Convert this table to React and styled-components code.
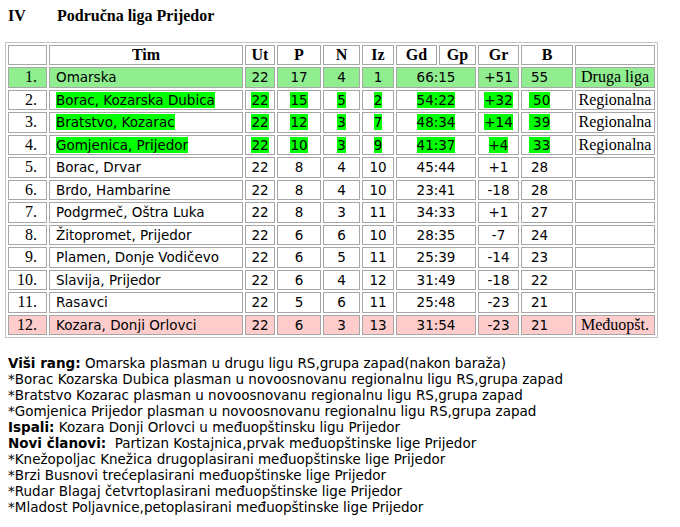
import styled, { createGlobalStyle } from "styled-components"

const GlobalStyle = createGlobalStyle`
    body {
        margin : 0;
        background : #ffffff;
        color : #000000;
    }
`

const rows = [
    { rank: "1.", team: "Omarska", ut: 22, p: 17, n: 4, iz: 1, goals: "66:15", gr: "+51", b: 55, note: "Druga liga", row: "up" },
    { rank: "2.", team: "Borac, Kozarska Dubica", ut: 22, p: 15, n: 5, iz: 2, goals: "54:22", gr: "+32", b: 50, note: "Regionalna", mark: true },
    { rank: "3.", team: "Bratstvo, Kozarac", ut: 22, p: 12, n: 3, iz: 7, goals: "48:34", gr: "+14", b: 39, note: "Regionalna", mark: true },
    { rank: "4.", team: "Gomjenica, Prijedor", ut: 22, p: 10, n: 3, iz: 9, goals: "41:37", gr: "+4", b: 33, note: "Regionalna", mark: true },
    { rank: "5.", team: "Borac, Drvar", ut: 22, p: 8, n: 4, iz: 10, goals: "45:44", gr: "+1", b: 28 },
    { rank: "6.", team: "Brdo, Hambarine", ut: 22, p: 8, n: 4, iz: 10, goals: "23:41", gr: "-18", b: 28 },
    { rank: "7.", team: "Podgrmeč, Oštra Luka", ut: 22, p: 8, n: 3, iz: 11, goals: "34:33", gr: "+1", b: 27 },
    { rank: "8.", team: "Žitopromet, Prijedor", ut: 22, p: 6, n: 6, iz: 10, goals: "28:35", gr: "-7", b: 24 },
    { rank: "9.", team: "Plamen, Donje Vodičevo", ut: 22, p: 6, n: 5, iz: 11, goals: "25:39", gr: "-14", b: 23 },
    { rank: "10.", team: "Slavija, Prijedor", ut: 22, p: 6, n: 4, iz: 12, goals: "31:49", gr: "-18", b: 22 },
    { rank: "11.", team: "Rasavci", ut: 22, p: 5, n: 6, iz: 11, goals: "25:48", gr: "-23", b: 21 },
    { rank: "12.", team: "Kozara, Donji Orlovci", ut: 22, p: 6, n: 3, iz: 13, goals: "31:54", gr: "-23", b: 21, note: "Međuopšt.", row: "down" },
]

const rowColors = {
    up: "#90ee90",
    down: "#ffcccc",
}

const colWidths = [39, 194, 30, 44, 37, 32, 41, 37, 41, 52, 80]

const Hl = ({ on, children }) => (on ? <Mark>{children}</Mark> : children)

const App = () => {
    return (
        <Page>
            <GlobalStyle />
            <Title>
                <TitleNum>IV</TitleNum>
                <span>Područna liga Prijedor</span>
            </Title>
            <Table>
                <colgroup>
                    {colWidths.map((w, i) => (
                        <col key={i} style={{ width: w }} />
                    ))}
                </colgroup>
                <thead>
                    <tr>
                        <Head></Head>
                        <Head>Tim</Head>
                        <Head>Ut</Head>
                        <Head>P</Head>
                        <Head>N</Head>
                        <Head>Iz</Head>
                        <Head>Gd</Head>
                        <Head>Gp</Head>
                        <Head>Gr</Head>
                        <Head>B</Head>
                        <Head></Head>
                    </tr>
                </thead>
                <tbody>
                    {rows.map((r) => {
                        const bg = rowColors[r.row]
                        return (
                            <tr key={r.rank}>
                                <Rank $bg={bg}>{r.rank}</Rank>
                                <Team $bg={bg}><Hl on={r.mark}>{r.team}</Hl></Team>
                                <Num $bg={bg}><Hl on={r.mark}>{r.ut}</Hl></Num>
                                <Num $bg={bg}><Hl on={r.mark}>{r.p}</Hl></Num>
                                <Num $bg={bg}><Hl on={r.mark}>{r.n}</Hl></Num>
                                <Num $bg={bg}><Hl on={r.mark}>{r.iz}</Hl></Num>
                                <Num $bg={bg} colSpan={2}><Hl on={r.mark}>{r.goals}</Hl></Num>
                                <Num $bg={bg}><Hl on={r.mark}>{r.gr}</Hl></Num>
                                <Points $bg={bg}><Hl on={r.mark}>{r.mark ? "\u00a0" : ""}{r.b}</Hl></Points>
                                <Status $bg={bg}>{r.note}</Status>
                            </tr>
                        )
                    })}
                </tbody>
            </Table>
            <Notes>
                <div><Label>Viši rang:</Label> Omarska plasman u drugu ligu RS,grupa zapad(nakon baraža)</div>
                <div>*Borac Kozarska Dubica plasman u novoosnovanu regionalnu ligu RS,grupa zapad</div>
                <div>*Bratstvo Kozarac plasman u novoosnovanu regionalnu ligu RS,grupa zapad</div>
                <div>*Gomjenica Prijedor plasman u novoosnovanu regionalnu ligu RS,grupa zapad</div>
                <div><Label>Ispali:</Label> Kozara Donji Orlovci u međuopštinsku ligu Prijedor</div>
                <div><Label>Novi članovi:</Label>&nbsp; Partizan Kostajnica,prvak međuopštinske lige Prijedor</div>
                <div>*Knežopoljac Knežica drugoplasirani međuopštinske lige Prijedor</div>
                <div>*Brzi Busnovi trećeplasirani međuopštinske lige Prijedor</div>
                <div>*Rudar Blagaj četvrtoplasirani međuopštinske lige Prijedor</div>
                <div>*Mladost Poljavnice,petoplasirani međuopštinske lige Prijedor</div>
            </Notes>
        </Page>
    )
}

export default App


const Page = styled.div`
    padding : 7px 5px 0;
    width : 680px;
    box-sizing : border-box;
`
const Title = styled.div`
    display : flex;
    padding-left : 3px;
    font-family : "Liberation Serif", serif;
    font-weight : bold;
    font-size : 16px;
    line-height : 18px;
`
const TitleNum = styled.span`
    width : 49px;
`
const Table = styled.table`
    margin-top : 17px;
    table-layout : fixed;
    width : 651px;
    border-collapse : separate;
    border-spacing : 2px;
    border : 1px solid #c4c4c4;
    empty-cells : show;
`
const Cell = styled.td`
    box-sizing : border-box;
    height : 20.5px;
    padding : 0 1px;
    border : 1px solid #a6a6a6;
    background : ${(p) => p.$bg || "#ffffff"};
    white-space : nowrap;
    overflow : hidden;
    vertical-align : middle;
`
const Head = styled.th`
    box-sizing : border-box;
    height : 20px;
    padding : 0;
    border : 1px solid #a6a6a6;
    font-family : "Liberation Serif", serif;
    font-weight : bold;
    font-size : 16px;
    text-align : center;
`
const Rank = styled(Cell)`
    font-family : "Liberation Serif", serif;
    font-size : 16px;
    text-align : right;
    padding-right : 9px;
`
const Team = styled(Cell)`
    font-family : "DejaVu Sans", Verdana, sans-serif;
    font-size : 13.5px;
    text-align : left;
    padding-left : 6px;
`
const Num = styled(Cell)`
    font-family : "DejaVu Sans", Verdana, sans-serif;
    font-size : 13.5px;
    text-align : center;
`
const Points = styled(Num)`
    padding-right : 16px;
`
const Status = styled(Cell)`
    font-family : "Liberation Serif", serif;
    font-size : 16px;
    text-align : center;
    padding : 0;
`
const Mark = styled.span`
    background : #00ff00;
`
const Notes = styled.div`
    margin-top : 17px;
    padding-left : 3px;
    font-family : "DejaVu Sans", Verdana, sans-serif;
    font-size : 13.5px;
    line-height : 16px;
`
const Label = styled.b`
    font-weight : bold;
`
